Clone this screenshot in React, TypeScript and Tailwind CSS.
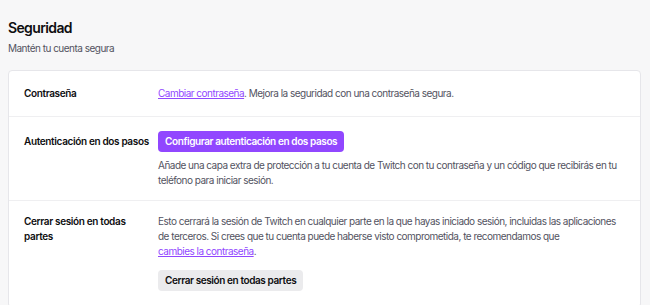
export default function App() {
  return (
    <main
      className="min-h-screen bg-[#f7f7f8] tracking-[-0.032em] text-[#0e0e10]"
      style={{ fontFamily: "Inter, 'Noto Sans', sans-serif" }}
    >
      <div className="pl-[8px] pr-[9px] pt-[18px]">
        <h2 className="text-[14px] font-semibold leading-[20px] tracking-[-0.045em]">
          Seguridad
        </h2>
        <p className="mt-[3px] text-[10px] leading-[15px] text-[#53535f]">
          Mantén tu cuenta segura
        </p>

        <section className="mt-[14px] rounded-[4px] border border-[#e6e6ea] bg-white text-[10px] leading-[15px]">
          <div className="flex items-center border-b border-[#efeff1] px-[15px] py-[15px]">
            <div className="w-[134px] shrink-0 font-semibold tracking-[-0.035em]">
              Contraseña
            </div>
            <p className="text-[#53535f]">
              <a href="#" className="text-[#9147ff] underline">
                Cambiar contraseña
              </a>
              . Mejora la seguridad con una contraseña segura.
            </p>
          </div>

          <div className="flex border-b border-[#efeff1] px-[15px] pb-[12px] pt-[14px]">
            <div className="w-[134px] shrink-0 pt-[3px] font-semibold tracking-[-0.035em]">
              Autenticación en dos pasos
            </div>
            <div>
              <button className="h-[21px] rounded-[4px] bg-[#9147ff] px-[7px] font-semibold tracking-[-0.04em] text-white">
                Configurar autenticación en dos pasos
              </button>
              <p className="mt-[6px] text-[#53535f]">
                Añade una capa extra de protección a tu cuenta de Twitch con tu
                contraseña y un código que recibirás en tu teléfono para iniciar
                sesión.
              </p>
            </div>
          </div>

          <div className="flex px-[15px] pb-[16px] pt-[13px]">
            <div className="w-[134px] shrink-0 pr-[10px] font-semibold tracking-[-0.035em]">
              Cerrar sesión en todas partes
            </div>
            <div>
              <p className="text-[#53535f]">
                Esto cerrará la sesión de Twitch en cualquier parte en la que
                hayas iniciado sesión, incluidas las aplicaciones de terceros. Si
                crees que tu cuenta puede haberse visto comprometida, te
                recomendamos que{" "}
                <a href="#" className="whitespace-nowrap text-[#9147ff] underline">
                  cambies la contraseña
                </a>
                .
              </p>
              <button className="mt-[11px] h-[21px] rounded-[4px] bg-[#ebebed] px-[7px] font-semibold tracking-[-0.04em] text-[#0e0e10]">
                Cerrar sesión en todas partes
              </button>
            </div>
          </div>
        </section>
      </div>
    </main>
  );
}
